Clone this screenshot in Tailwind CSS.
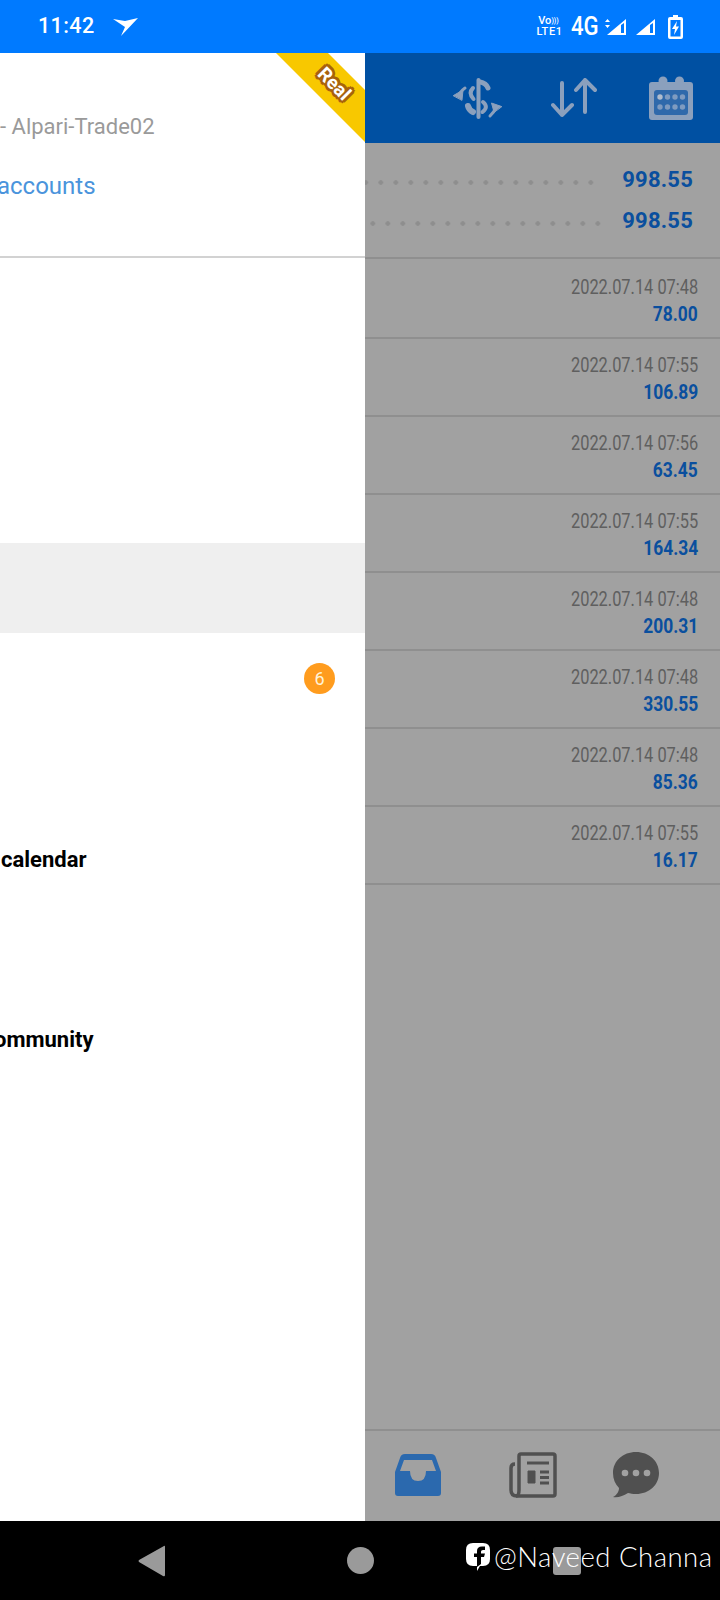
<!DOCTYPE html>
<html lang="en">
<head>
  <meta charset="UTF-8" />
  <meta name="viewport" content="width=device-width, initial-scale=1.0" />
  <title>Trade history menu</title>
  <script src="https://cdn.jsdelivr.net/npm/@tailwindcss/browser@4"></script>
</head>
<body class="bg-black font-['Roboto',sans-serif]">
  <div class="relative w-[720px] h-[1600px] overflow-hidden flex flex-col">

    <!-- status bar -->
    <div class="h-[53px] shrink-0 bg-[#007aff] text-white flex items-center pl-[38px] pr-[37px]">
      <span class="text-[21.5px] font-medium tracking-[0.4px]">11:42</span>
      <svg class="ml-[18px]" width="26" height="20" viewBox="0 0 26 20" fill="white"><path d="M0 2 L12 4 L25 1 L8 19 L12 10 Z"/></svg>
      <div class="ml-auto flex items-center">
        <div class="text-[11px] leading-[10px] font-medium text-center w-[27px]">
          <div class="flex justify-center pr-[2px]">Vo<span class="text-[7px]">)))</span></div>
          <div class="tracking-[0.6px] whitespace-nowrap mt-[1px]">LTE1</div>
        </div>
        <span class="ml-[8px] text-[26px] font-medium scale-x-[.85] origin-left w-[27px]">4G</span>
        <svg class="ml-[7px]" width="21" height="20" viewBox="0 0 21 20" fill="white">
          <path d="M0 5 L2.500 2 L5 5 Z M0 8 L5 8 L2.500 11 Z"/>
          <path fill-rule="evenodd" d="M2 18 L21 2 L21 18 Z M16 8 L16 16 L19 16 L19 6 Z"/>
        </svg>
        <svg class="ml-[10px]" width="19" height="20" viewBox="0 0 19 20" fill="white">
          <path fill-rule="evenodd" d="M0 18 L19 2 L19 18 Z M14 8 L14 16 L17 16 L17 6 Z"/>
        </svg>
        <svg class="ml-[13px]" width="15" height="24" viewBox="0 0 15 24" fill="white">
          <path fill-rule="evenodd" d="M5 0 H10 V2 H13 Q15 2 15 4 V22 Q15 24 13 24 H2 Q0 24 0 22 V4 Q0 2 2 2 H5 Z M2.500 5 V21.500 H12.500 V5 Z"/>
          <path d="M9 6 L4 14 H7 L6 20 L11 11.500 H8 Z"/>
        </svg>
      </div>
    </div>

    <div class="flex-1 flex min-h-0">
      <!-- drawer -->
      <div class="w-[365px] shrink-0 bg-white flex flex-col relative overflow-hidden">
        <div class="h-[205px] shrink-0 border-b-[2px] border-[#d2d2d2] overflow-hidden whitespace-nowrap">
          <div class="pt-[60px] text-[22px] leading-[28px] text-[#9a9a9a]">- Alpari-Trade02</div>
          <div class="pt-[31px] text-[24px] leading-[28px] text-[#4a94dc] -ml-[3px]">accounts</div>
        </div>
        <div class="h-[285px] shrink-0"></div>
        <div class="h-[90px] shrink-0 bg-[#efefef]"></div>
        <div class="h-[90px] shrink-0 flex items-center justify-end pr-[30px]">
          <div class="w-[31px] h-[31px] rounded-full bg-[#ff9c1e] text-[#fff3d8] text-[18px] flex items-center justify-center">6</div>
        </div>
        <div class="h-[90px] shrink-0"></div>
        <div class="h-[90px] shrink-0 flex items-center whitespace-nowrap text-[22px] font-bold text-black pl-[1px] pt-[2px]">calendar</div>
        <div class="h-[90px] shrink-0"></div>
        <div class="h-[90px] shrink-0 flex items-center whitespace-nowrap text-[22px] font-bold text-black -ml-[6px] pt-[3px]">ommunity</div>

        <!-- Real ribbon -->
        <svg class="absolute top-0 right-0" width="89" height="89" viewBox="0 0 89 89"><path d="M0 0 H52 L89 37 V89 Z" fill="#f8c800"/></svg>
        <div class="absolute top-[20px] right-[6px] w-[50px] h-[22px] rotate-45 text-white text-[19px] leading-[22px] font-bold text-center [text-shadow:2px_2px_0_#a8620c,-2px_-2px_0_#a8620c,2px_-2px_0_#a8620c,-2px_2px_0_#a8620c,0_3px_0_#a8620c,0_-3px_0_#a8620c,3px_0_0_#a8620c,-3px_0_0_#a8620c]">Real</div>
      </div>

      <!-- screen behind the drawer, dimmed -->
      <div class="flex-1 min-w-0 bg-[#a1a1a1] flex flex-col">
        <div class="h-[90px] shrink-0 bg-[#0050a2] flex items-center pl-[88px]">
          <svg width="50" height="42" viewBox="0 0 50 42" fill="none" stroke="#8ba0bd" stroke-width="4" stroke-linecap="round">
            <path d="M25.500 3 V40"/>
            <path d="M27 5 Q33 6 35 11" stroke-width="5"/>
            <path d="M20 11 Q15 16 20.500 22"/>
            <path d="M30 25 Q36 30 29.500 35"/>
            <path d="M15 29 Q16 33 20 35" stroke-width="6"/>
            <path d="M7 16 Q9 13 12 11" stroke-width="3"/>
            <path d="M43 31 Q41 35 37 39" stroke-width="3"/>
            <path d="M0.500 18.500 L10 13 L9 23 Z M48.500 29.500 L38.500 26 L41 35 Z" fill="#8ba0bd" stroke-width="1"/>
          </svg>
          <svg class="ml-[48px]" width="46" height="40" viewBox="0 0 46 40" fill="none" stroke="#8ba0bd" stroke-width="4" stroke-linecap="round" stroke-linejoin="round">
            <path d="M11 5 V37 M2 27 L11 37 L21 27"/>
            <path d="M34 2 V34 M25 12 L34 2 L44 12"/>
          </svg>
          <svg class="ml-[52px]" width="44" height="45" viewBox="0 0 44 45">
            <circle cx="14" cy="5" r="4.500" fill="#8ba0bd"/>
            <circle cx="30.500" cy="5" r="4.500" fill="#8ba0bd"/>
            <rect x="0" y="6" width="44" height="38" rx="3" fill="#8ba0bd"/>
            <rect x="5" y="14" width="34" height="25" rx="3" fill="#2f69ab"/>
            <g fill="#7f9bc0">
              <circle cx="11" cy="21" r="2.700" fill="#b0bccd"/><circle cx="18.500" cy="21" r="2.700"/><circle cx="26" cy="21" r="2.700"/><circle cx="33.500" cy="21" r="2.700"/>
              <circle cx="11" cy="31" r="2.700"/><circle cx="18.500" cy="31" r="2.700"/><circle cx="26" cy="31" r="2.700"/><circle cx="33.500" cy="31" r="2.700"/>
            </g>
          </svg>
        </div>
        <div class="h-[116px] shrink-0 border-b-[2px] border-[#8f8f8f] pt-[23px]">
          <div class="flex items-center justify-end pr-[27px] h-[26px]">
            <div class="w-[234px] h-[5px] mt-[6px] bg-[radial-gradient(circle,#8e8e8e_2px,transparent_2.500px)] bg-[length:15px_5px] bg-right mr-[24px]"></div>
            <span class="text-[22px] font-bold text-[#0a4f9e] tracking-[0.2px]">998.55</span>
          </div>
          <div class="flex items-center justify-end pr-[27px] h-[26px] mt-[15px]">
            <div class="w-[241px] h-[5px] mt-[6px] bg-[radial-gradient(circle,#8e8e8e_2px,transparent_2.500px)] bg-[length:15px_5px] bg-right mr-[17px]"></div>
            <span class="text-[22px] font-bold text-[#0a4f9e] tracking-[0.2px]">998.55</span>
          </div>
        </div>
        <div class="flex-1">
          <div class="h-[80px] border-b-[2px] border-[#8f8f8f] flex flex-col items-end justify-end pb-[9px] pr-[22px]">
            <span class="text-[20px] leading-[27px] text-[#5f5f5f] scale-x-[.82] origin-right whitespace-nowrap">2022.07.14 07:48</span>
            <span class="text-[20px] leading-[27px] font-bold text-[#0a4f9e] scale-x-[.87] origin-right">78.00</span>
          </div>
          <div class="h-[78px] border-b-[2px] border-[#8f8f8f] flex flex-col items-end justify-end pb-[9px] pr-[22px]">
            <span class="text-[20px] leading-[27px] text-[#5f5f5f] scale-x-[.82] origin-right whitespace-nowrap">2022.07.14 07:55</span>
            <span class="text-[20px] leading-[27px] font-bold text-[#0a4f9e] scale-x-[.87] origin-right">106.89</span>
          </div>
          <div class="h-[78px] border-b-[2px] border-[#8f8f8f] flex flex-col items-end justify-end pb-[9px] pr-[22px]">
            <span class="text-[20px] leading-[27px] text-[#5f5f5f] scale-x-[.82] origin-right whitespace-nowrap">2022.07.14 07:56</span>
            <span class="text-[20px] leading-[27px] font-bold text-[#0a4f9e] scale-x-[.87] origin-right">63.45</span>
          </div>
          <div class="h-[78px] border-b-[2px] border-[#8f8f8f] flex flex-col items-end justify-end pb-[9px] pr-[22px]">
            <span class="text-[20px] leading-[27px] text-[#5f5f5f] scale-x-[.82] origin-right whitespace-nowrap">2022.07.14 07:55</span>
            <span class="text-[20px] leading-[27px] font-bold text-[#0a4f9e] scale-x-[.87] origin-right">164.34</span>
          </div>
          <div class="h-[78px] border-b-[2px] border-[#8f8f8f] flex flex-col items-end justify-end pb-[9px] pr-[22px]">
            <span class="text-[20px] leading-[27px] text-[#5f5f5f] scale-x-[.82] origin-right whitespace-nowrap">2022.07.14 07:48</span>
            <span class="text-[20px] leading-[27px] font-bold text-[#0a4f9e] scale-x-[.87] origin-right">200.31</span>
          </div>
          <div class="h-[78px] border-b-[2px] border-[#8f8f8f] flex flex-col items-end justify-end pb-[9px] pr-[22px]">
            <span class="text-[20px] leading-[27px] text-[#5f5f5f] scale-x-[.82] origin-right whitespace-nowrap">2022.07.14 07:48</span>
            <span class="text-[20px] leading-[27px] font-bold text-[#0a4f9e] scale-x-[.87] origin-right">330.55</span>
          </div>
          <div class="h-[78px] border-b-[2px] border-[#8f8f8f] flex flex-col items-end justify-end pb-[9px] pr-[22px]">
            <span class="text-[20px] leading-[27px] text-[#5f5f5f] scale-x-[.82] origin-right whitespace-nowrap">2022.07.14 07:48</span>
            <span class="text-[20px] leading-[27px] font-bold text-[#0a4f9e] scale-x-[.87] origin-right">85.36</span>
          </div>
          <div class="h-[78px] border-b-[2px] border-[#8f8f8f] flex flex-col items-end justify-end pb-[9px] pr-[22px]">
            <span class="text-[20px] leading-[27px] text-[#5f5f5f] scale-x-[.82] origin-right whitespace-nowrap">2022.07.14 07:55</span>
            <span class="text-[20px] leading-[27px] font-bold text-[#0a4f9e] scale-x-[.87] origin-right">16.17</span>
          </div>
        </div>
        <!-- bottom tabs -->
        <div class="h-[92px] shrink-0 border-t-[2px] border-[#8f8f8f] flex items-center pl-[30px] pb-[2px]">
          <svg width="46" height="42" viewBox="0 0 46 42">
            <path fill="#2b69ae" fill-rule="evenodd" d="M10 0 H36 Q40 0 41 4 L46 18 V39 Q46 42 43 42 H3 Q0 42 0 39 V18 L5 4 Q6 0 10 0 Z M9 6 L5 17 H15 Q15 27 23 27 Q31 27 31 17 H41 L37 6 Z"/>
          </svg>
          <svg class="ml-[68px]" width="48" height="46" viewBox="0 0 48 46" fill="none" stroke="#505050" stroke-width="3.500">
            <path d="M10 4 Q10 2 12 2 H44 Q46 2 46 4 V42 Q46 44 44 44 H8"/>
            <path d="M8 44 Q2 44 2 38 V16 Q2 12 6 12"/>
            <path d="M10 4 V38 Q10 44 7 44"/>
            <path d="M18 11 H40" stroke-width="3"/>
            <path d="M19 19 H26 V31 H19 Z" fill="#505050" stroke-width="1"/>
            <path d="M31 20 H40 M31 25.500 H40 M31 31 H40" stroke-width="3"/>
          </svg>
          <svg class="ml-[56px]" width="46" height="46" viewBox="0 0 46 46">
            <path fill="#505050" d="M23 0 C36 0 46 9 46 21 C46 33 36 42 23 42 C20 42 17 41.500 15 41 C10 44 5 46 0 45 C4 43 6 39 6 36 C2 32 0 27 0 21 C0 9 10 0 23 0 Z"/>
            <circle cx="12" cy="21" r="3.300" fill="#a1a1a1"/><circle cx="23" cy="21" r="3.300" fill="#a1a1a1"/><circle cx="34" cy="21" r="3.300" fill="#a1a1a1"/>
          </svg>
        </div>
      </div>
    </div>

    <!-- nav bar -->
    <div class="h-[79px] shrink-0 bg-black relative flex items-center">
      <svg class="ml-[138px]" width="28" height="32" viewBox="0 0 28 32" fill="#9a9a9a"><path d="M26 1 Q27 0 27 2 V30 Q27 32 25 31 L1 17 Q0 16 1 15 Z"/></svg>
      <div class="ml-[181px] w-[27px] h-[27px] rounded-full bg-[#9a9a9a]"></div>
      <div class="ml-[179px] w-[28px] h-[28px] rounded-[3px] bg-[#9a9a9a]"></div>
      <!-- watermark sits on top of the nav buttons -->
      <div class="absolute left-[466px] top-[21px] flex items-center text-white whitespace-nowrap">
        <svg width="24" height="28" viewBox="0 0 24 28"><path fill="white" fill-rule="evenodd" d="M7 0 H17 Q24 0 24 7 V16 Q24 23 17 23 H14 L11 28 V23 H7 Q0 23 0 16 V7 Q0 0 7 0 Z"/><path fill="black" d="M11 24 V14 H8 V10.500 H11 V8 Q11 3.500 16 3.500 H19 V7 H17 Q15 7 15 8.500 V10.500 H19 L18 14 H15 V21 Z"/></svg>
        <span class="ml-[4px] text-[27.500px] leading-[30px] font-['Lato',sans-serif] font-light tracking-[0.5px]">@Naveed Channa</span>
      </div>
    </div>
  </div>
</body>
</html>
